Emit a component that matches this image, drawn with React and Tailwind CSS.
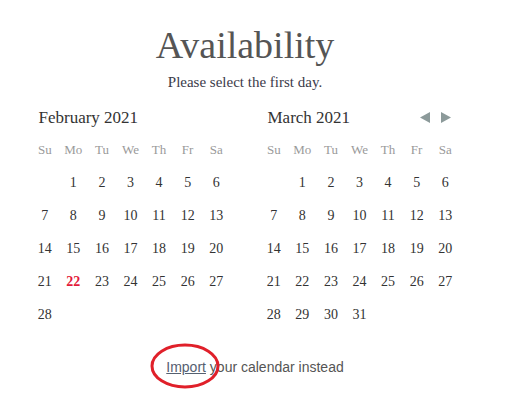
import React from 'react';

const weekdays = ['Su', 'Mo', 'Tu', 'We', 'Th', 'Fr', 'Sa'];

function buildDays(offset, count) {
  const cells = [];
  for (let i = 0; i < offset; i++) cells.push(null);
  for (let d = 1; d <= count; d++) cells.push(d);
  return cells;
}

function Month({ title, offset, count, today, arrows }) {
  const cells = buildDays(offset, count);
  return (
    <div className="w-[200px]">
      <div className="flex items-center justify-between h-8 pl-2">
        <span className="text-[17px] text-[#333]">{title}</span>
        {arrows && (
          <div className="flex items-center gap-[9px] pr-[8px]">
            <svg width="12" height="13" viewBox="0 0 12 13">
              <path d="M1 6.5 L11 1 L11 12 Z" fill="#8c9a9a" />
            </svg>
            <svg width="12" height="13" viewBox="0 0 12 13">
              <path d="M11 6.5 L1 1 L1 12 Z" fill="#8c9a9a" />
            </svg>
          </div>
        )}
      </div>
      <div className="grid grid-cols-7">
        {weekdays.map((w) => (
          <div key={w} className="h-8 flex items-center justify-center text-[13px] text-[#9a9a9a]">
            {w}
          </div>
        ))}
        {cells.map((d, i) => (
          <div
            key={i}
            className={`h-[33px] flex items-center justify-center text-[14px] ${
              d === today ? 'text-[#e31b3b] font-bold' : 'text-[#333]'
            }`}
          >
            {d}
          </div>
        ))}
      </div>
    </div>
  );
}

export default function App() {
  return (
    <div className="w-[517px] h-[405px] bg-white" style={{ fontFamily: '"Liberation Serif", serif' }}>
      <div className="w-[490px] flex flex-col items-center pt-[22px]">
        <h1 className="text-[38px] leading-[46px] text-[#555]">Availability</h1>
        <p className="text-[15px] text-[#3b3b4a] mt-[3px]">Please select the first day.</p>
        <div className="flex gap-[29px] mt-[8px]">
          <Month title="February 2021" offset={1} count={28} today={22} />
          <Month title="March 2021" offset={1} count={31} arrows />
        </div>
        <div className="relative mt-[24px] ml-[20px]" style={{ fontFamily: '"Liberation Sans", Arial, sans-serif' }}>
          <span className="text-[14px] text-[#555]">
            <a className="underline text-[#556070]">Import</a> your calendar instead
          </span>
          <svg
            className="absolute left-[-16px] top-[-13px]"
            width="72"
            height="48"
            viewBox="0 0 72 48"
          >
            <ellipse cx="35" cy="24" rx="33" ry="21" fill="none" stroke="#e0202a" strokeWidth="3" />
          </svg>
        </div>
      </div>
    </div>
  );
}
